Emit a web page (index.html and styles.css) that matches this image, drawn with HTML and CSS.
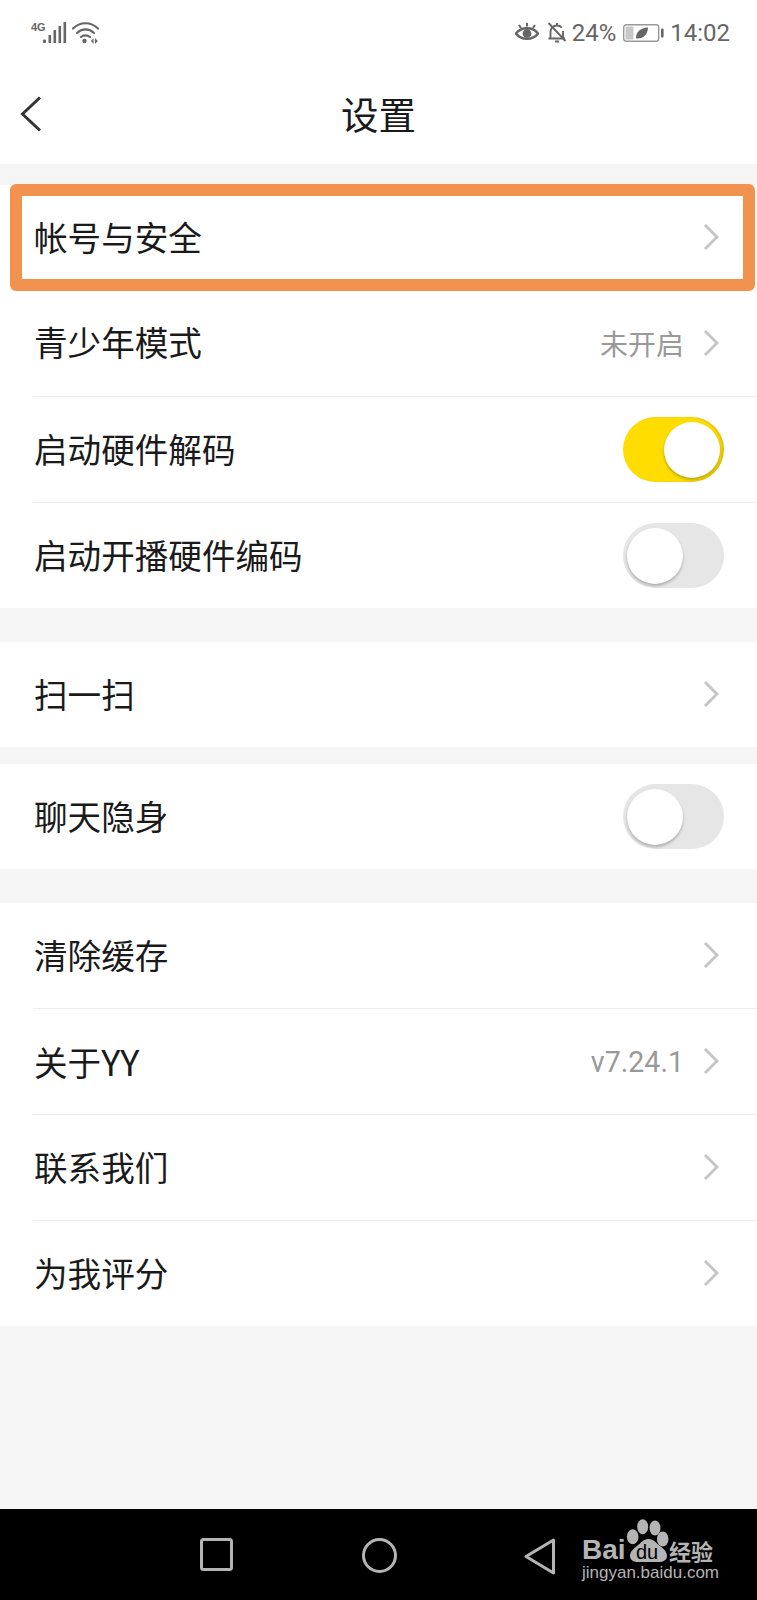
FILE: index.html
```html
<!DOCTYPE html>
<html lang="zh-CN">
<head>
<meta charset="utf-8">
<title>设置</title>
<link rel="stylesheet" href="styles.css">
</head>
<body>
<div class="page">
  <header class="top">
    <div class="status">
      <div class="status-left">
        <span class="net">4G</span>
        <svg class="signal" width="24" height="22" viewBox="0 0 24 22"><g fill="#666"><rect x="0" y="17.500" width="3" height="3.500" rx="1"/><rect x="5.500" y="13" width="2.600" height="8"/><rect x="10.500" y="8" width="2.600" height="13"/><rect x="15.500" y="4" width="2.600" height="17"/><rect x="20.500" y="0" width="2.600" height="21"/></g></svg>
        <svg class="wifi" width="27" height="22" viewBox="0 0 27 22"><g fill="none" stroke="#666" stroke-width="2.200" stroke-linecap="round"><path d="M1 6.500C8 -0.500 19 -0.500 26 6.500"/><path d="M5 11C10 6.200 17 6.200 22 11"/><path d="M9 15C11.500 12.800 15.500 12.800 18 15"/></g><g fill="#666"><circle cx="12.500" cy="19" r="2.200"/><path d="M19 19l2.500-3v6zM23 16l2.800 3-2.800 3z"/></g></svg>
      </div>
      <div class="status-right">
        <svg class="eye" width="24" height="20" viewBox="0 0 24 20"><path d="M1 11.500C6 4.500 18 4.500 23 11.500C18 18.500 6 18.500 1 11.500Z" fill="none" stroke="#666" stroke-width="2.400"/><circle cx="12" cy="11.500" r="4.400" fill="#666"/><path d="M4 3l2 3M12 1v3.400M20 3l-2 3" stroke="#666" stroke-width="2" fill="none"/></svg>
        <svg class="bell" width="20" height="21" viewBox="0 0 20 21"><path d="M3.500 16.500V10C3.500 6.500 6 3.500 10 3.500C12 3.500 13.700 4.300 14.800 5.600M16 9V16.500H1.500M18 16.500H16M8 19.500H12M10 1V3.500" fill="none" stroke="#666" stroke-width="1.900"/><path d="M1.500 1L18.500 19" stroke="#666" stroke-width="1.900"/></svg>
        <span class="pct">24%</span>
        <svg class="battery" width="41" height="18" viewBox="0 0 41 18"><rect x="0.700" y="0.700" width="35" height="16.600" rx="2.500" fill="none" stroke="#999" stroke-width="1.400"/><rect x="2.500" y="2.500" width="8" height="13" fill="#c8c8c8"/><path d="M13 14C13 8 17 4 25 3.500C25 10 20.500 15 13.500 14.500Z" fill="#666"/><rect x="38" y="4.500" width="2.600" height="9" rx="1" fill="#666"/></svg>
        <span class="time">14:02</span>
      </div>
    </div>
    <div class="nav">
      <svg class="back" width="24" height="38" viewBox="0 0 24 38"><path d="M21 2.500L3.500 19L21 35.500" fill="none" stroke="#333" stroke-width="3"/></svg>
      <h1 class="title">设置</h1>
    </div>
  </header>

  <main class="content">
    <section class="group group-first">
      <div class="row row-short"><span class="label">帐号与安全</span><svg class="chev" width="16" height="28" viewBox="0 0 16 28"><path d="M2 2L14 14L2 26" fill="none" stroke="#c6c6c6" stroke-width="3"/></svg></div>
      <div class="row row-plain"><span class="label">青少年模式</span><span class="value">未开启</span><svg class="chev" width="16" height="28" viewBox="0 0 16 28"><path d="M2 2L14 14L2 26" fill="none" stroke="#c6c6c6" stroke-width="3"/></svg></div>
      <div class="row"><span class="label">启动硬件解码</span><span class="toggle toggle-on"><span class="knob"></span></span></div>
      <div class="row"><span class="label">启动开播硬件编码</span><span class="toggle"><span class="knob"></span></span></div>
      <div class="highlight"></div>
    </section>
    <section class="group group-gap-l">
      <div class="row row-short"><span class="label">扫一扫</span><svg class="chev" width="16" height="28" viewBox="0 0 16 28"><path d="M2 2L14 14L2 26" fill="none" stroke="#c6c6c6" stroke-width="3"/></svg></div>
    </section>
    <section class="group group-gap-s">
      <div class="row row-short"><span class="label">聊天隐身</span><span class="toggle"><span class="knob"></span></span></div>
    </section>
    <section class="group group-gap-l">
      <div class="row row-short"><span class="label">清除缓存</span><svg class="chev" width="16" height="28" viewBox="0 0 16 28"><path d="M2 2L14 14L2 26" fill="none" stroke="#c6c6c6" stroke-width="3"/></svg></div>
      <div class="row"><span class="label">关于<span class="latin">YY</span></span><span class="value value-num">v7.24.1</span><svg class="chev" width="16" height="28" viewBox="0 0 16 28"><path d="M2 2L14 14L2 26" fill="none" stroke="#c6c6c6" stroke-width="3"/></svg></div>
      <div class="row"><span class="label">联系我们</span><svg class="chev" width="16" height="28" viewBox="0 0 16 28"><path d="M2 2L14 14L2 26" fill="none" stroke="#c6c6c6" stroke-width="3"/></svg></div>
      <div class="row"><span class="label">为我评分</span><svg class="chev" width="16" height="28" viewBox="0 0 16 28"><path d="M2 2L14 14L2 26" fill="none" stroke="#c6c6c6" stroke-width="3"/></svg></div>
    </section>
  </main>

  <footer class="softkeys">
    <svg class="key-square" width="33" height="33" viewBox="0 0 33 33"><rect x="1.500" y="1.500" width="30" height="30" rx="2" fill="none" stroke="#b4b4b4" stroke-width="3"/></svg>
    <svg class="key-circle" width="35" height="35" viewBox="0 0 35 35"><circle cx="17.500" cy="17.500" r="16" fill="none" stroke="#b4b4b4" stroke-width="3"/></svg>
    <svg class="key-back" width="32" height="37" viewBox="0 0 32 37"><path d="M29.500 2L2 18.500L29.500 35Z" fill="none" stroke="#b4b4b4" stroke-width="3" stroke-linejoin="round"/></svg>
    <div class="watermark">
      <svg class="paw" width="44" height="44" viewBox="0 0 44 44"><g fill="#b4b4b4"><ellipse cx="16.700" cy="7.700" rx="5.500" ry="7.500"/><ellipse cx="29" cy="9" rx="5.500" ry="7.500"/><ellipse cx="6.700" cy="17.700" rx="5.800" ry="7.500"/><ellipse cx="36.700" cy="20" rx="5.800" ry="7.500"/><path d="M22.500 20C28 20 30 24 34 27C40 31 41 35 41 37C41 41 37 43 33 43H12C8 43 4 41 4 37C4 33 7 30 11 27C15 24 17 20 22.500 20Z"/></g></svg>
      <span class="wm-bai">Bai</span>
      <span class="wm-du">du</span>
      <span class="wm-jy">经验</span>
      <span class="wm-url">jingyan.baidu.com</span>
    </div>
  </footer>
</div>
</body>
</html>
```
FILE: styles.css
```css
* { box-sizing: border-box; }
html, body { margin: 0; padding: 0; }
body {
  font-family: "Noto Sans CJK SC", "Noto Sans", sans-serif;
  background: #f5f5f5;
}
.page {
  width: 757px;
  height: 1600px;
  display: flex;
  flex-direction: column;
  overflow: hidden;
}
.top { background: #fff; height: 164px; flex: none; }
.status {
  height: 64px;
  display: flex;
  align-items: center;
  justify-content: space-between;
  padding: 1px 27px 0 31px;
  color: #666;
}
.status-left { display: flex; align-items: flex-start; }
.net {
  font: bold 11px/11px "Liberation Sans Narrow", "Liberation Sans", sans-serif;
  width: 12px;
  color: #666;
}
.signal { margin-right: 5px; }
.status-right { display: flex; align-items: center; }
.eye { margin-right: 8px; margin-top: -2px; }
.bell { margin-right: 5px; }
.pct, .time {
  font: 400 24px/28px Roboto, "Liberation Sans", sans-serif;
  color: #666;
}
.battery { margin-left: 7px; }
.time { margin-left: 6px; }
.nav {
  height: 100px;
  position: relative;
  display: flex;
  align-items: center;
  justify-content: center;
}
.back { position: absolute; left: 19px; top: 31px; }
.title {
  margin: 0;
  font-size: 37.500px;
  font-weight: 400;
  line-height: 50px;
  color: #1a1a1a;
  transform: translateY(-1px);
}
.content { flex: 1; display: flex; flex-direction: column; }
.group { background: #fff; position: relative; }
.group-first { margin-top: 21px; }
.group-gap-l { margin-top: 34px; }
.group-gap-s { margin-top: 17px; }
.row {
  height: 106px;
  margin-left: 33px;
  padding-right: 38px;
  display: flex;
  align-items: center;
  border-top: 1px solid #eee;
}
.group .row:first-child { border-top: 0; }
.row-plain { border-top: 0; }
.row-short { height: 105px; }
.label {
  flex: 1;
  font-size: 33.600px;
  line-height: 44px;
  color: #1a1a1a;
  transform: translate(1px, -1px);
}
.latin { font-size: 36px; }
.value {
  font-size: 28px;
  line-height: 40px;
  color: #999;
  margin-right: 19px;
}
.value-num { font-family: Roboto, "Liberation Sans", sans-serif; font-size: 28.600px; }
.chev { flex: none; margin-top: -1px; }
.toggle {
  width: 101px;
  height: 65px;
  border-radius: 33px;
  background: #e6e6e6;
  display: flex;
  align-items: center;
  padding: 0 4px;
  margin-right: -5px;
  flex: none;
}
.toggle-on {
  background: #ffdd00;
  box-shadow: inset -2px 0 2px rgba(120, 110, 60, .25);
  justify-content: flex-end;
}
.knob {
  width: 56px;
  height: 56px;
  border-radius: 50%;
  background: #fff;
  box-shadow: 0 2px 3px rgba(0, 0, 0, .25);
}
.highlight {
  position: absolute;
  left: 10px;
  top: -1px;
  width: 745px;
  height: 107px;
  border: 12px solid #f1934f;
  border-radius: 6px;
}
.softkeys {
  height: 91px;
  flex: none;
  background: #000;
  position: relative;
  display: flex;
  align-items: flex-start;
  padding: 29px 0 0 200px;
}
.key-circle { margin-left: 129px; }
.key-back { margin-left: 127px; }
.watermark {
  position: absolute;
  left: 580px;
  top: 0;
  width: 140px;
  height: 91px;
  color: #b4b4b4;
}
.paw { position: absolute; left: 46px; top: 10px; }
.wm-bai {
  position: absolute;
  left: 2px;
  top: 24px;
  font: bold 28px/34px "Liberation Sans", sans-serif;
}
.wm-du {
  position: absolute;
  left: 56px;
  top: 31px;
  font: 400 20px/24px "Liberation Sans", sans-serif;
  color: #000;
}
.wm-jy {
  position: absolute;
  left: 89px;
  top: 24px;
  font-size: 22px;
  line-height: 34px;
  font-weight: 700;
}
.wm-url {
  position: absolute;
  left: 2px;
  top: 52px;
  font: 400 17px/24px "Liberation Sans", sans-serif;
  white-space: nowrap;
}
```
